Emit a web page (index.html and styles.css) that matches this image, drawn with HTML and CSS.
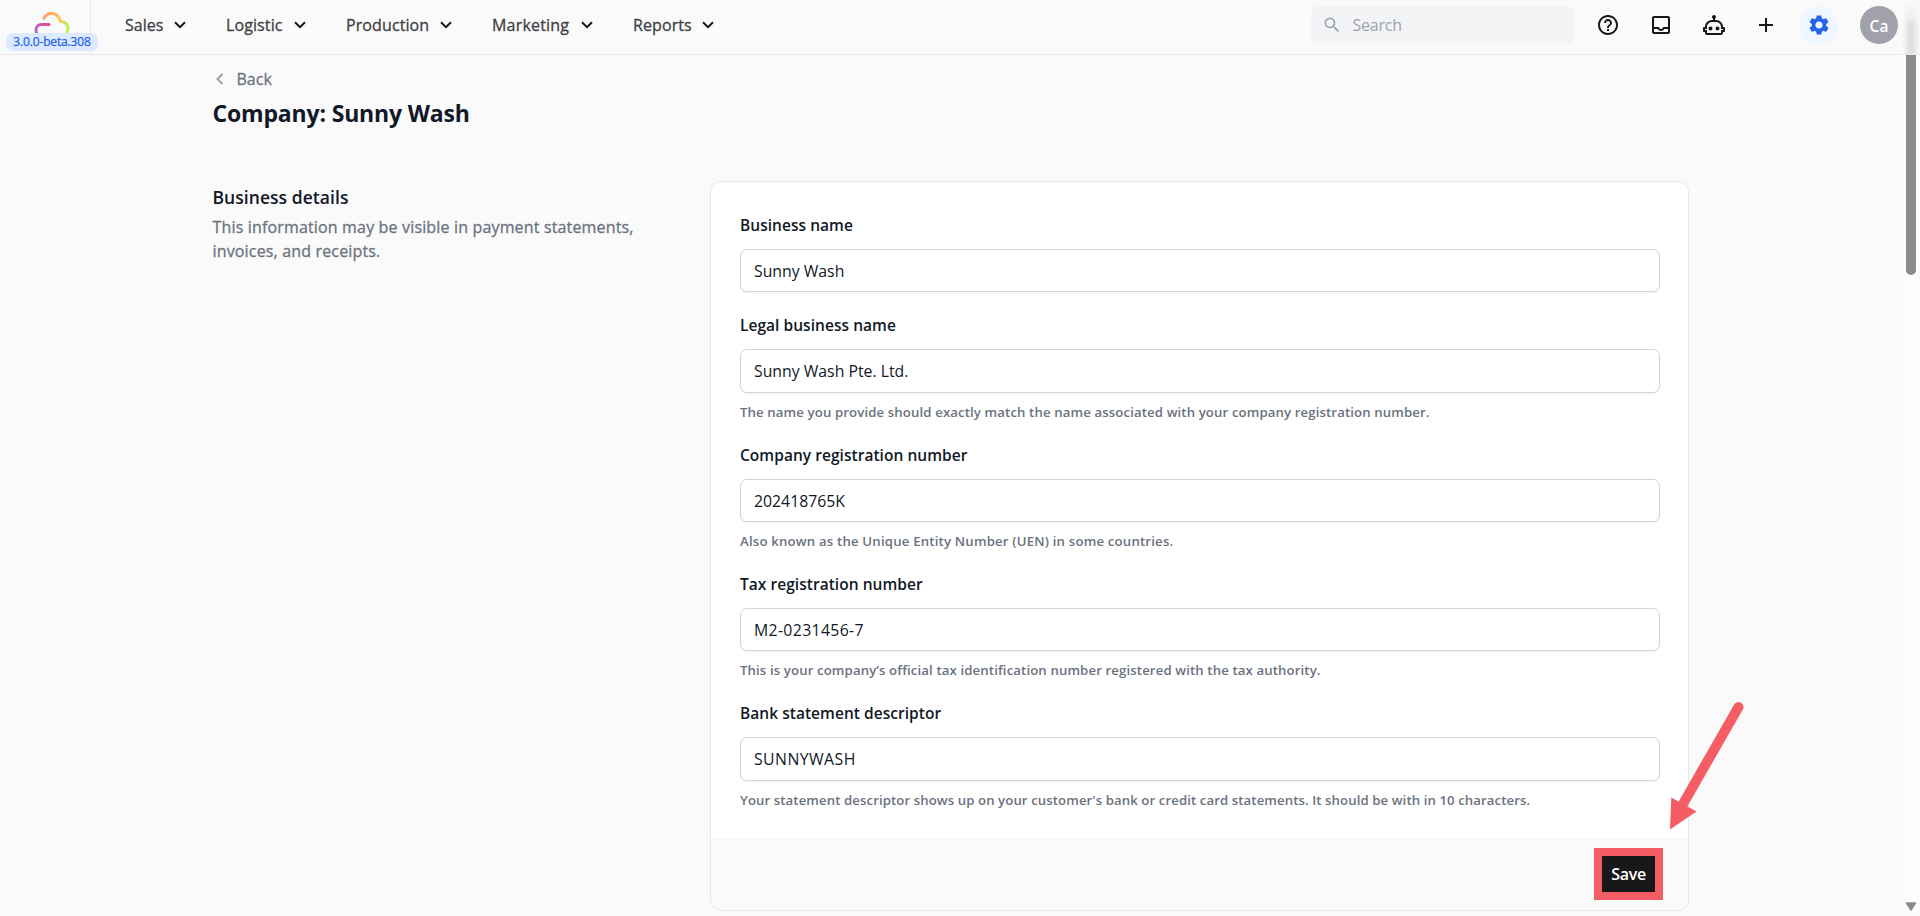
FILE: index.html
```html
<!DOCTYPE html>
<html lang="en">
<head>
<meta charset="utf-8">
<title>Company: Sunny Wash</title>
<link rel="stylesheet" href="styles.css">
</head>
<body>
<header class="topbar">
  <div class="brand">
    <svg class="logo" width="40" height="32" viewBox="0 0 40 32" fill="none" stroke-width="3" stroke-linecap="round">
      <defs>
        <linearGradient id="warm" x1="12" y1="0" x2="37" y2="20" gradientUnits="userSpaceOnUse"><stop offset="0" stop-color="#ff9478"/><stop offset=".55" stop-color="#fdca4c"/><stop offset="1" stop-color="#b4f55f"/></linearGradient>
        <linearGradient id="pink" x1="3" y1="0" x2="18" y2="0" gradientUnits="userSpaceOnUse"><stop offset="0" stop-color="#b767c8"/><stop offset="1" stop-color="#ff4380"/></linearGradient>
      </defs>
      <path stroke="url(#warm)" d="M12 8.300C14 4.500 17 3.200 20 3.500C24.500 3.800 27.500 7 28.500 11.500C33 11.300 36 14.500 36 18.500C36 23 33 26 28 26"/>
      <path stroke="url(#pink)" d="M17 14.500H9.500C6 14.500 4 17 4 20C4 24 7 26 10 26"/>
    </svg>
    <span class="version">3.0.0-beta.308</span>
  </div>
  <nav class="menu">
    <a class="menu-item"><span class="m-sales">Sales</span><svg class="chev" viewBox="0 0 12 8"><path d="M1 1.200 6 6.200 11 1.200"/></svg></a>
    <a class="menu-item"><span class="m-logistic">Logistic</span><svg class="chev" viewBox="0 0 12 8"><path d="M1 1.200 6 6.200 11 1.200"/></svg></a>
    <a class="menu-item"><span class="m-production">Production</span><svg class="chev" viewBox="0 0 12 8"><path d="M1 1.200 6 6.200 11 1.200"/></svg></a>
    <a class="menu-item"><span class="m-marketing">Marketing</span><svg class="chev" viewBox="0 0 12 8"><path d="M1 1.200 6 6.200 11 1.200"/></svg></a>
    <a class="menu-item"><span class="m-reports">Reports</span><svg class="chev" viewBox="0 0 12 8"><path d="M1 1.200 6 6.200 11 1.200"/></svg></a>
  </nav>
  <div class="search">
    <svg width="20" height="20" viewBox="0 0 24 24" fill="#9ca3af"><path d="M15.500 14h-.79l-.28-.27A6.470 6.470 0 0 0 16 9.500 6.500 6.500 0 1 0 9.500 16c1.610 0 3.090-.59 4.230-1.570l.27.28v.79l5 4.990L20.490 19l-4.990-5zm-6 0C7.010 14 5 11.990 5 9.500S7.010 5 9.500 5 14 7.010 14 9.500 11.990 14 9.500 14z"/></svg>
    <span>Search</span>
  </div>
  <div class="actions">
    <span class="action"><svg viewBox="0 0 24 24"><path d="M11 18h2v-2h-2v2zm1-16C6.480 2 2 6.480 2 12s4.480 10 10 10 10-4.480 10-10S17.520 2 12 2zm0 18c-4.410 0-8-3.590-8-8s3.590-8 8-8 8 3.590 8 8-3.590 8-8 8zm0-14c-2.210 0-4 1.790-4 4h2c0-1.100.9-2 2-2s2 .9 2 2c0 2-3 1.750-3 5h2c0-2.250 3-2.500 3-5 0-2.210-1.790-4-4-4z"/></svg></span>
    <span class="action"><svg viewBox="0 0 24 24"><path d="M19 3H5c-1.100 0-2 .9-2 2v14c0 1.100.9 2 2 2h14c1.100 0 2-.9 2-2V5c0-1.100-.9-2-2-2zm0 16H5v-3h3.560c.69 1.190 1.970 2 3.450 2s2.750-.81 3.450-2H19v3zm0-5h-4.990c0 1.100-.9 2-2 2s-2-.9-2-2H5V5h14v9z"/></svg></span>
    <span class="action"><svg viewBox="0 0 24 24"><path d="M17.500 15.500C17.500 16.610 16.610 17.500 15.500 17.500S13.500 16.610 13.500 15.500 14.400 13.500 15.500 13.500 17.500 14.400 17.500 15.500M8.500 13.500C7.400 13.500 6.500 14.400 6.500 15.500S7.400 17.500 8.500 17.500 10.500 16.610 10.500 15.500 9.610 13.500 8.500 13.500M23 15V18C23 18.550 22.550 19 22 19H21V20C21 21.110 20.110 22 19 22H5C3.900 22 3 21.110 3 20V19H2C1.450 19 1 18.550 1 18V15C1 14.450 1.450 14 2 14H3C3 10.130 6.130 7 10 7H11V5.730C10.400 5.390 10 4.740 10 4C10 2.900 10.900 2 12 2S14 2.900 14 4C14 4.740 13.600 5.390 13 5.730V7H14C17.870 7 21 10.130 21 14H22C22.550 14 23 14.450 23 15M21 16H19V14C19 11.240 16.760 9 14 9H10C7.240 9 5 11.240 5 14V16H3V17H5V20H19V17H21V16Z"/></svg></span>
    <span class="action"><svg viewBox="0 0 24 24"><path d="M19 13h-6v6h-2v-6H5v-2h6V5h2v6h6v2z"/></svg></span>
    <span class="action active"><svg viewBox="0 0 24 24"><path d="M19.140 12.940c.04-.3.06-.61.06-.94 0-.32-.02-.64-.07-.94l2.030-1.580a.49.49 0 0 0 .12-.61l-1.920-3.320a.488.488 0 0 0-.59-.22l-2.390.96c-.5-.38-1.030-.7-1.620-.94l-.36-2.540a.484.484 0 0 0-.48-.41h-3.840c-.24 0-.43.17-.47.41l-.36 2.540c-.59.24-1.130.57-1.620.94l-2.390-.96c-.22-.08-.47 0-.59.22L2.740 8.870c-.12.21-.08.47.12.61l2.030 1.580c-.05.3-.09.63-.09.94s.02.64.07.94l-2.030 1.580a.49.49 0 0 0-.12.61l1.920 3.320c.12.22.37.29.59.22l2.390-.96c.5.38 1.030.7 1.620.94l.36 2.540c.05.24.24.41.48.41h3.840c.24 0 .44-.17.47-.41l.36-2.540c.59-.24 1.130-.56 1.620-.94l2.390.96c.22.08.47 0 .59-.22l1.920-3.320c.12-.22.07-.47-.12-.61l-2.010-1.580zM12 15.600c-1.980 0-3.600-1.620-3.600-3.600s1.620-3.600 3.600-3.600 3.600 1.620 3.600 3.600-1.620 3.600-3.600 3.600z"/></svg></span>
    <span class="avatar">Ca</span>
  </div>
  <div class="topbar-shade"></div>
</header>

<main class="page">
  <a class="back"><svg width="8" height="12" viewBox="0 0 8 12"><path d="M6.500 1 1.500 6l5 5"/></svg><span>Back</span></a>
  <h1 class="title">Company: Sunny Wash</h1>
  <div class="section">
    <div class="intro">
      <h2>Business details</h2>
      <p>This information may be visible in payment statements,<br>invoices, and receipts.</p>
    </div>
    <form class="card">
      <div class="fields">
        <div class="field first">
          <label>Business name</label>
          <div class="input">Sunny Wash</div>
        </div>
        <div class="field">
          <label>Legal business name</label>
          <div class="input">Sunny Wash Pte. Ltd.</div>
          <p class="hint">The name you provide should exactly match the name associated with your company registration number.</p>
        </div>
        <div class="field">
          <label>Company registration number</label>
          <div class="input">202418765K</div>
          <p class="hint hint-uen">Also known as the Unique Entity Number (UEN) in some countries.</p>
        </div>
        <div class="field">
          <label>Tax registration number</label>
          <div class="input digits">M2-0231456-7</div>
          <p class="hint">This is your company’s official tax identification number registered with the tax authority.</p>
        </div>
        <div class="field">
          <label>Bank statement descriptor</label>
          <div class="input caps">SUNNYWASH</div>
          <p class="hint hint-bank">Your statement descriptor shows up on your customer's bank or credit card statements. It should be with in 10 characters.</p>
        </div>
      </div>
      <div class="card-footer"><div class="save">Save</div></div>
    </form>
  </div>
</main>

<svg class="arrow" width="80" height="136" viewBox="0 0 80 136">
  <path d="M73.500 12 18 109" stroke="#f45d64" stroke-width="10" stroke-linecap="round" fill="none"/>
  <path d="M5 134.500 6.300 102.500 31.500 116.500Z" fill="#f45d64"/>
</svg>
<div class="scrollbar"><div class="thumb"></div><svg width="12" height="10" viewBox="0 0 12 10"><path d="M1.500 1h9L6 8.200Z" fill="#8b8b8b" stroke="#8b8b8b" stroke-width="1.500" stroke-linejoin="round"/></svg></div>
</body>
</html>
```
FILE: styles.css
```css
* { box-sizing: border-box; }
body {
  margin: 0;
  height: 916px;
  overflow: hidden;
  position: relative;
  background: #fafafa;
  color: #111827;
  font: 16px/24px "Open Sans", "Noto Sans", sans-serif;
}
h1, h2, p { margin: 0; }

.topbar {
  position: relative;
  display: flex;
  align-items: center;
  height: 55px;
  padding-bottom: 4px;
  border-bottom: 1px solid #e5e7eb;
}
.brand {
  position: relative;
  flex: none;
  width: 91px;
  height: 54px;
  margin-bottom: -4px;
  padding: 10px 0 0 32px;
  border-right: 1px solid #e5e7eb;
}
.logo { display: block; }
.version {
  position: absolute;
  left: 6px;
  top: 33px;
  width: 92px;
  height: 18px;
  border-radius: 7px;
  background: #dbeafe;
  color: #2563eb;
  font-size: 12px;
  letter-spacing: -.15px;
  line-height: 17px;
  text-align: center;
  white-space: nowrap;
  -webkit-text-stroke: .25px currentColor;
}
.menu { display: flex; gap: 40px; margin-left: 34px; }
.menu-item {
  display: flex;
  align-items: center;
  gap: 11px;
  color: #3f3f46;
  white-space: nowrap;
  -webkit-text-stroke: .3px currentColor;
}
.menu-item span { flex: none; }
.m-sales { width: 38px; }
.m-logistic { width: 57px; letter-spacing: .1px; }
.m-production { width: 83px; letter-spacing: .1px; }
.m-marketing { width: 78px; letter-spacing: .2px; }
.m-reports { width: 58px; letter-spacing: .1px; }
.chev { width: 12px; height: 8px; fill: none; stroke: #18181b; stroke-width: 2; }

.search {
  display: flex;
  align-items: center;
  gap: 10px;
  width: 263px;
  height: 38px;
  margin-left: auto;
  padding-left: 11px;
  border-radius: 7px;
  background: #f3f4f6;
  color: #9ca3af;
  letter-spacing: -.2px;
}
.actions { display: flex; align-items: center; margin: 0 22px 0 14.500px; }
.action {
  display: grid;
  place-items: center;
  width: 39px;
  height: 39px;
  margin-right: 13.600px;
  border-radius: 50%;
}
.action svg { width: 24px; height: 24px; fill: #18181b; }
.action.active { margin-right: 21.700px; background: #eff6ff; }
.action.active svg { fill: #2563eb; }
.avatar {
  width: 38px;
  height: 38px;
  border-radius: 50%;
  background: #a1a1aa;
  color: #fff;
  font-size: 15.500px;
  font-weight: 600;
  line-height: 40px;
  text-align: center;
}
.topbar-shade {
  position: absolute;
  right: 1px;
  top: 0;
  width: 17px;
  height: 54px;
  background: linear-gradient(#fafafa, rgba(250, 250, 250, .5) 35%, transparent 45%), linear-gradient(90deg, #fafafa, #e0e0e0 45%, #e0e0e0 60%, #f4f4f4);
}

.page { width: 1476.500px; margin-left: 212.500px; padding-top: 12px; }
.back { display: flex; align-items: center; gap: 13px; padding-left: 3px; color: #6b7280; -webkit-text-stroke: .3px currentColor; }
.back svg { fill: none; stroke: #9ca3af; stroke-width: 2; }
.title { margin-top: 5px; font-size: 23px; font-weight: 700; letter-spacing: -.17px; line-height: 34px; }
.section { display: flex; justify-content: space-between; margin-top: 51px; }
.intro { padding-top: 4px; white-space: nowrap; }
.intro p { color: #6b7280; letter-spacing: .16px; -webkit-text-stroke: .3px currentColor; }
.intro h2 { margin-bottom: 5px; font-size: 17.500px; font-weight: 600; letter-spacing: .05px; line-height: 25px; }

.card {
  flex: none;
  width: 979px;
  height: 730px;
  overflow: hidden;
  border: 1px solid #e5e7eb;
  border-radius: 11px;
  background: #fafafa;
}
.fields { height: 656px; padding: 31px 28px 0 29px; background: #fff; }
.field { height: 129.300px; white-space: nowrap; }
.field.first { height: 100.400px; }
.field label { display: block; height: 36px; font-size: 15.500px; font-weight: 600; letter-spacing: .04px; line-height: 25.500px; }
.input {
  height: 43.300px;
  padding-left: 13px;
  border: 1px solid #d1d5db;
  border-radius: 7px;
  background: #fff;
  box-shadow: 0 1px 2px rgba(0, 0, 0, .06);
  font-size: 15.800px;
  line-height: 42.500px;
}
.digits { letter-spacing: .35px; }
.caps { letter-spacing: .45px; }
.hint { margin-top: 9px; color: #6b7280; font-size: 13.200px; font-weight: 600; letter-spacing: .12px; line-height: 21px; }
.hint-uen { letter-spacing: .19px; }
.hint-bank { letter-spacing: .09px; }
.card-footer { display: flex; justify-content: flex-end; padding: 10px 25px 0 0; }
.save {
  width: 69px;
  height: 52px;
  border: 8px solid #f45d64;
  background: #18181b;
  color: #fff;
  font-weight: 600;
  letter-spacing: -.3px;
  line-height: 37px;
  text-align: center;
}

.arrow { position: absolute; left: 1665px; top: 695px; }
.scrollbar {
  position: absolute;
  right: 0;
  top: 55px;
  display: flex;
  flex-direction: column;
  justify-content: space-between;
  width: 18px;
  height: 857px;
  padding-left: 3px;
  background: #fcfcfc;
}
.thumb { width: 10px; height: 220px; margin-left: 1px; border-radius: 0 0 5px 5px; background: #8b8b8b; }
```
